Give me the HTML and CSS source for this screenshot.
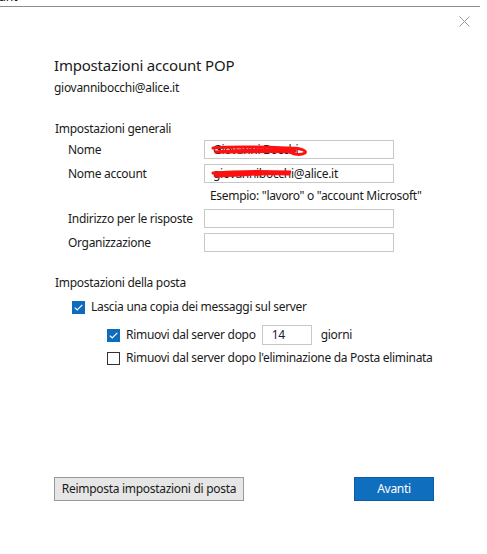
FILE: index.html
```html
<!DOCTYPE html>
<html lang="it">
<head>
<meta charset="utf-8">
<title>Impostazioni account POP</title>
<link rel="stylesheet" href="styles.css">
</head>
<body>
<div class="topstrip"><span class="topstrip-text">Account</span></div>
<div class="dialog">
  <button class="close" aria-label="Chiudi">
    <svg width="11" height="11" viewBox="0 0 11 11"><path d="M0.5 0.5 L10.5 10.5 M10.5 0.5 L0.5 10.5" stroke="#9a9a9a" stroke-width="1" fill="none"/></svg>
  </button>
  <h1 class="title">Impostazioni account POP</h1>
  <div class="email">giovannibocchi@alice.it</div>

  <div class="section-label general">Impostazioni generali</div>
  <div class="form">
    <label class="lbl">Nome</label>
    <div class="field scribbled">
      <span class="val">Giovanni Bocchi</span>
      <svg class="scribble" width="100" height="14" viewBox="0 0 100 14"><path d="M2 5 C25 3 50 4 78 5 C88 5 96 7 94 10 C90 12 82 12 80 9 C70 8 40 9 4 9 C30 7 60 7 84 8" stroke="#ff1010" stroke-width="3" fill="none" stroke-linecap="round"/></svg>
    </div>
    <label class="lbl">Nome account</label>
    <div class="field scribbled">
      <span class="val">giovannibocchi@alice.it</span>
      <svg class="scribble s2" width="84" height="14" viewBox="0 0 84 14"><path d="M2 7 C25 5 50 5 80 6 C60 8 30 9 4 10 C30 7 55 7 78 8" stroke="#ff1010" stroke-width="3" fill="none" stroke-linecap="round"/></svg>
    </div>
    <div></div>
    <div class="hint">Esempio: "lavoro" o "account Microsoft"</div>
    <label class="lbl">Indirizzo per le risposte</label>
    <div class="field"></div>
    <label class="lbl">Organizzazione</label>
    <div class="field"></div>
  </div>

  <div class="section-label mail">Impostazioni della posta</div>
  <div class="check-row level1">
    <span class="cb checked"><svg width="9" height="7" viewBox="0 0 9 7"><path d="M0.8 3.6 L3.2 6 L8.3 0.8" stroke="#fff" stroke-width="1.2" fill="none"/></svg></span>
    <span>Lascia una copia dei messaggi sul server</span>
  </div>
  <div class="check-row level2 days-row">
    <span class="cb checked"><svg width="9" height="7" viewBox="0 0 9 7"><path d="M0.8 3.6 L3.2 6 L8.3 0.8" stroke="#fff" stroke-width="1.2" fill="none"/></svg></span>
    <span class="days-label">Rimuovi dal server dopo</span>
    <div class="days-input">14</div>
    <span>giorni</span>
  </div>
  <div class="check-row level2 last-row">
    <span class="cb"></span>
    <span>Rimuovi dal server dopo l'eliminazione da Posta eliminata</span>
  </div>

  <div class="buttons">
    <button class="btn secondary">Reimposta impostazioni di posta</button>
    <button class="btn primary">Avanti</button>
  </div>
</div>
</body>
</html>
```

FILE: styles.css
```css
* { box-sizing: border-box; }
html, body { margin: 0; padding: 0; background: #fff; }
body {
  width: 487px;
  height: 554px;
  overflow: hidden;
  font-family: "Noto Sans", "Open Sans", sans-serif;
  font-size: 12px;
  color: #1a1a1a;
}
.topstrip {
  height: 7px;
  border-bottom: 1px solid #8c8c8c;
  width: 480px;
  overflow: hidden;
  position: relative;
}
.topstrip-text {
  display: block;
  margin-top: -10px;
  margin-left: -28px;
  font-size: 12px;
  line-height: 14px;
  color: #111;
}
.dialog {
  position: relative;
  padding: 0 54px;
}
.close {
  position: absolute;
  top: 9px;
  left: 459px;
  padding: 0;
  border: 0;
  background: none;
  line-height: 0;
}
.title {
  margin: 0;
  padding-top: 48px;
  font-size: 15px;
  font-weight: 400;
  line-height: 20px;
  color: #1a1a1a;
  letter-spacing: -0.2px;
}
.email {
  margin-top: 5px;
  line-height: 16px;
  letter-spacing: -0.3px;
}
.section-label {
  line-height: 16px;
  letter-spacing: -0.3px;
}
.general { margin-top: 25px; padding-left: 1px; }
.form {
  display: grid;
  grid-template-columns: 136px 190px;
  grid-template-rows: 19px 19px 16px 19px 19px;
  row-gap: 5px;
  margin-top: 3px;
  padding-left: 14px;
  align-items: center;
}
.lbl {
  letter-spacing: -0.3px;
  line-height: 16px;
}
.field {
  height: 19px;
  border: 1px solid #c8c8c8;
  position: relative;
  padding-left: 8px;
  line-height: 17px;
  letter-spacing: -0.3px;
  white-space: nowrap;
  overflow: hidden;
}
.scribble {
  position: absolute;
  left: 6px;
  top: 2px;
}
.scribble.s2 { top: 1px; }
.hint {
  padding-left: 6px;
  letter-spacing: -0.3px;
  line-height: 16px;
  white-space: nowrap;
}
.mail { margin-top: 23px; padding-left: 1px; }
.check-row {
  display: flex;
  align-items: center;
  gap: 6px;
  line-height: 16px;
  letter-spacing: -0.3px;
}
.level1 { margin-top: 8px; padding-left: 18px; }
.level2 { padding-left: 53px; }
.days-row { margin-top: 10px; height: 20px; }
.last-row { margin-top: 5px; }
.cb {
  width: 13px;
  height: 13px;
  border: 1px solid #333;
  background: #fff;
  display: inline-flex;
  align-items: center;
  justify-content: center;
  flex: none;
}
.cb.checked {
  background: #0f6cbd;
  border-color: #0f6cbd;
}
.days-label { margin-right: 0; }
.days-input {
  width: 50px;
  height: 20px;
  border: 1px solid #c8c8c8;
  padding-left: 9px;
  line-height: 18px;
  color: #1a1a3a;
  margin-right: 3px;
}
.buttons {
  display: flex;
  justify-content: space-between;
  margin-top: 111px;
  width: 380px;
}
.btn {
  font-family: inherit;
  font-size: 12px;
  height: 24px;
  padding: 0;
  line-height: 20px;
  letter-spacing: -0.3px;
}
.secondary {
  width: 190px;
  background: #e6e6e6;
  border: 1px solid #999;
  color: #1a1a1a;
}
.primary {
  width: 80px;
  background: #106ebe;
  border: 1px solid #0a5ea8;
  color: #fff;
}
```
